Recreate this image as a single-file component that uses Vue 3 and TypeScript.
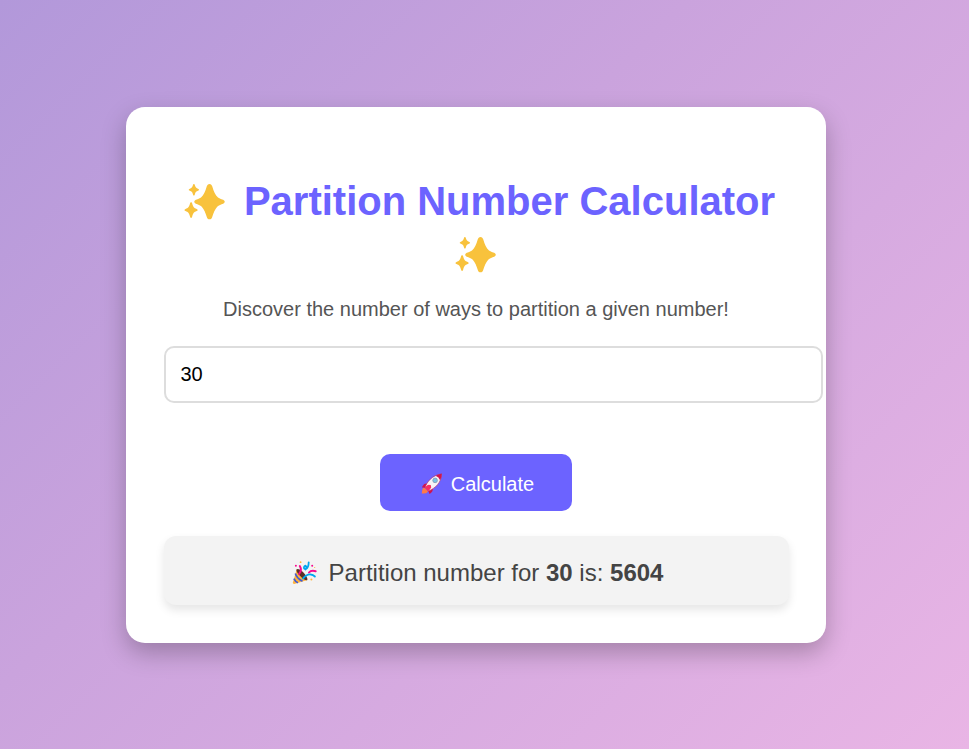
<script setup lang="ts">
import { computed, ref } from 'vue'

const input = ref<string>('30')
const submitted = ref<number>(30)

function partitions(n: number): number {
  const ways: number[] = new Array(n + 1).fill(0)
  ways[0] = 1
  for (let part = 1; part <= n; part++) {
    for (let sum = part; sum <= n; sum++) ways[sum] += ways[sum - part]
  }
  return ways[n]
}

const result = computed<number>(() => partitions(submitted.value))

function calculate(): void {
  const n = Number.parseInt(input.value, 10)
  if (n >= 0 && n <= 400) submitted.value = n
}
</script>

<template>
  <main class="page">
    <section class="card">
      <h1 class="title">
        <span class="title-row first">
          <svg class="sparkles" viewBox="0 0 42 38" aria-hidden="true">
            <g id="sparkle-shape" fill="#f8c23c">
              <path d="M25.5 1C27 1 27.8 2 28.2 3.3C29.8 8.5 31.3 12.5 34 14.4C35.8 15.6 38.1 16.2 39.2 16.7C41.3 17.6 41.3 19.8 39.2 20.7C37.2 21.5 34.8 22.1 33.2 23.8C30.8 26.4 29.6 30 28.2 34C27.8 35.4 27 36.3 25.5 36.3C24 36.3 23.2 35.4 22.8 34C21.4 30 20.2 26.4 17.8 23.8C16.2 22.1 13.8 21.5 11.8 20.7C9.7 19.8 9.7 17.6 11.8 16.7C12.9 16.2 15.2 15.6 17 14.4C19.7 12.5 21.2 8.5 22.8 3.3C23.2 2 24 1 25.5 1Z" />
              <path d="M9.9 1C10.5 1 10.6 1.5 10.8 2.1C11.6 4.6 12.1 5 14.4 5.9C15.3 6.3 15.3 7.2 14.4 7.6C12.1 8.5 11.6 9 10.8 11.4C10.6 12 10.5 12.5 9.9 12.5C9.3 12.5 9.2 12 9 11.4C8.2 9 7.7 8.5 5.4 7.6C4.5 7.2 4.5 6.3 5.4 5.9C7.7 5 8.2 4.6 9 2.1C9.2 1.5 9.3 1 9.9 1Z" />
              <path d="M7.1 19.2C7.8 19.2 8 19.8 8.2 20.5C9.2 24 10 24.9 12.7 26C14 26.5 14 27.6 12.7 28.1C10 29.2 9.2 30.1 8.2 33.6C8 34.3 7.8 34.9 7.1 34.9C6.4 34.9 6.2 34.3 6 33.6C5 30.1 4.2 29.2 1.5 28.1C.2 27.6 .2 26.5 1.5 26C4.2 24.9 5 24 6 20.5C6.2 19.8 6.4 19.2 7.1 19.2Z" />
            </g>
          </svg>
          <span>Partition Number Calculator</span>
        </span>
        <span class="title-row">
          <svg class="sparkles" viewBox="0 0 42 38" aria-hidden="true">
            <use href="#sparkle-shape" />
          </svg>
        </span>
      </h1>
      <p class="intro">Discover the number of ways to partition a given number!</p>
      <input v-model="input" class="field" type="text" inputmode="numeric" aria-label="Number" />
      <button class="calculate" type="button" @click="calculate">
        <svg class="rocket" viewBox="0 0 22 22" aria-hidden="true">
          <path fill="#ff7a48" d="M3.3 14.8C1.2 15.1 1.3 17.4.8 20.6C4 20.5 6.2 20.2 6.9 18.2Z" />
          <path fill="#cf1450" d="M6.5 10.2L3.2 10.9Q1.2 13 .9 14.5L5.3 14.7ZM12 15.8L11.4 18.3Q10 20.3 8.5 21L6.9 16.8Z" />
          <path fill="#f5f3f7" d="M4 14.7C6 8.8 11 2.2 20.5.9C20.6 9.5 14.2 15.4 7.3 18Z" />
          <path fill="#d01350" d="M14.6 2.7Q18 .8 20.8.7Q20.9 4 19.1 7.2Q18 4 14.6 2.7Z" />
          <path fill="none" stroke="#bd2859" stroke-width=".6" d="M4 14.7C6 8.8 11 2.2 20.5.9C20.6 9.5 14.2 15.4 7.3 18Z" />
          <path fill="#f92f60" d="M3.6 14.6Q6.2 11.4 10.8 10.8Q11.1 15.2 7.2 18.2Z" />
          <path fill="#f5f3f7" d="M7 11.6L11 8.4L13.4 11L10.4 14.4L9.7 12Z" />
          <circle cx="14.1" cy="7.4" r="2.3" fill="#77c5e8" stroke="#8797ad" stroke-width=".8" />
        </svg>
        <span>Calculate</span>
      </button>
      <div class="result">
        <svg class="popper" viewBox="0 0 25 24" aria-hidden="true">
          <path fill="#ffb33d" d="M4.7 8.2L.9 21.5Q.8 23.2 2.3 22.9L15.3 19.1Z" />
          <path fill="none" stroke="#405bd5" stroke-width="1.7" d="M3.3 12.5Q5 17.5 10.5 20.3M1.9 17.6Q3.5 21 6 21.8" />
          <path fill="#5a3027" d="M4.4 8.4Q6.8 6.8 11 11Q15.8 16 15.4 18.9Q13.6 20.7 8.7 15.6Q4 11 4.4 8.4Z" />
          <path fill="none" stroke="#f70a8d" stroke-width="2" stroke-linecap="round" d="M7.8 5.1Q10.4 9.5 7.1 12.9M17 11.5Q19 9 23.7 10.2" />
          <path fill="none" stroke="#00a6ed" stroke-width="1.8" stroke-linecap="round" d="M11 17.6Q14.5 13 18.8 13.5Q21 13.6 22.9 15.5M16.7 1.3Q16.6 6.8 14 8Q11.5 8.4 12 6Q13 3.8 14.2 5.5Q14.8 6.6 13.5 8.5" />
          <g fill="#f70a8d"><circle cx="3.9" cy="4.8" r="1" /><circle cx="20.2" cy="4.8" r="1" /></g>
          <g fill="#ffb33d"><circle cx="8.6" cy="1.2" r=".9" /><circle cx="19.4" cy="18.5" r="1" /><circle cx="22.7" cy="6.5" r=".6" /></g>
        </svg>
        <span>Partition number for <strong>{{ submitted }}</strong> is: <strong>{{ result }}</strong></span>
      </div>
    </section>
  </main>
</template>

<style>
body {
  margin: 0;
}
</style>

<style scoped>
.page {
  box-sizing: border-box;
  min-height: 100vh;
  padding-right: 17px;
  display: flex;
  align-items: center;
  justify-content: center;
  overflow: hidden;
  background: linear-gradient(135deg, #b298da, #caa3dd 40%, #e9b5e5);
  font-family: "Liberation Sans", Arial, sans-serif;
}

.card {
  box-sizing: border-box;
  width: 700px;
  height: 536px;
  padding: 68px 37.5px 37.5px;
  display: flex;
  flex-direction: column;
  align-items: center;
  border-radius: 19px;
  background: #fff;
  box-shadow: 0 10px 25px rgba(0, 0, 0, 0.25);
}

.title {
  width: 100%;
  margin: 0;
  color: #6c63ff;
  font-size: 40px;
  line-height: 53px;
  white-space: nowrap;
}

.title-row {
  height: 53px;
  display: flex;
  align-items: center;
  justify-content: center;
  gap: 18px;
}

.title-row.first {
  padding-left: 7px;
}

.sparkles {
  width: 42px;
  height: 38px;
  margin-top: 2px;
  flex: none;
}

.intro {
  margin: 16px 0 0;
  color: #555;
  font-size: 20px;
  line-height: 24px;
}

.field {
  box-sizing: border-box;
  align-self: flex-start;
  width: 659px;
  height: 57px;
  margin-top: 25px;
  padding: 0 15px;
  border: 2px solid #ddd;
  border-radius: 10px;
  outline: none;
  background: #fff;
  color: #000;
  font: 20px "Liberation Sans", Arial, sans-serif;
}

.calculate {
  width: 192px;
  height: 57px;
  margin-top: 51px;
  padding: 4px 0 0 3px;
  display: flex;
  align-items: center;
  justify-content: center;
  gap: 8px;
  border: 0;
  border-radius: 10px;
  background: #6c63ff;
  color: #fff;
  font: 20px "Liberation Sans", Arial, sans-serif;
  cursor: pointer;
}

.rocket {
  width: 22px;
  height: 22px;
}

.result {
  align-self: stretch;
  height: 69px;
  margin-top: 25px;
  padding: 6px 0 0 3px;
  box-sizing: border-box;
  display: flex;
  align-items: center;
  justify-content: center;
  gap: 12px;
  border-radius: 12px;
  background: #f3f3f3;
  box-shadow: 0 5px 10px rgba(0, 0, 0, 0.1);
  color: #444;
  font-size: 24px;
  white-space: nowrap;
}

.popper {
  width: 25px;
  height: 24px;
}
</style>
